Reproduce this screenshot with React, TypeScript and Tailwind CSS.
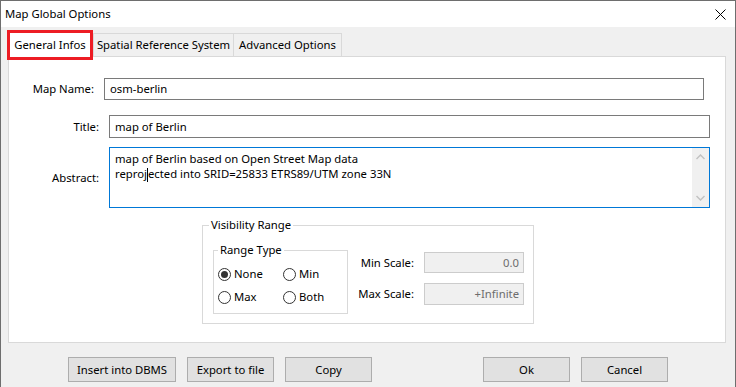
import React from "react";

function Radio({ checked, label }: { checked?: boolean; label: string }) {
  return (
    <div className="flex items-center h-[16px]">
      <span className="w-[13px] h-[13px] rounded-full border border-[#333333] bg-white flex items-center justify-center shrink-0">
        {checked && <span className="w-[7px] h-[7px] rounded-full bg-[#333333]" />}
      </span>
      <span className="ml-[3px]">{label}</span>
    </div>
  );
}

function Btn({ w, label }: { w: string; label: string }) {
  return (
    <div className={`${w} h-[25px] bg-[#e1e1e1] border border-[#adadad] flex items-center justify-center`}>
      {label}
    </div>
  );
}

export default function App() {
  return (
    <div className="w-[736px] h-[387px] bg-[#f0f0f0] border-l border-r border-t border-[#6e6e6e] flex flex-col text-[11.3px] text-black font-['Noto_Sans','Liberation_Sans',sans-serif] leading-[16px] whitespace-nowrap overflow-hidden">
      {/* title bar */}
      <div className="h-[26px] bg-white flex items-center justify-between pl-[4px] pr-[9px] shrink-0">
        <span>Map Global Options</span>
        <svg width="11" height="11" viewBox="0 0 11 11">
          <path d="M0.5 0.5 L10.5 10.5 M10.5 0.5 L0.5 10.5" stroke="#000" strokeWidth="1" />
        </svg>
      </div>

      {/* tabs */}
      <div className="flex items-end mt-[3px] ml-[6px] h-[26px] shrink-0">
        <div className="relative z-10 w-[86px] h-[30px] -mb-[4px] bg-white border-[3px] border-[#ed1c24] flex items-center justify-center">
          General Infos
        </div>
        <div className="w-[141px] h-[23px] bg-[#f0f0f0] border-t border-l border-r border-[#d9d9d9] flex items-center justify-center">
          Spatial Reference System
        </div>
        <div className="w-[108px] h-[23px] bg-[#f0f0f0] border-t border-r border-[#d9d9d9] flex items-center justify-center">
          Advanced Options
        </div>
      </div>

      {/* panel */}
      <div className="ml-[7px] w-[718px] h-[287px] bg-white border border-[#d9d9d9] flex flex-col shrink-0">
        <div className="flex items-center mt-[21px]">
          <div className="w-[85px] text-right">Map Name:</div>
          <div className="ml-[10px] w-[600px] h-[22px] border border-[#7a7a7a] flex items-center pl-[5px]">osm-berlin</div>
        </div>
        <div className="flex items-center mt-[15px]">
          <div className="w-[90px] text-right">Title:</div>
          <div className="ml-[10px] w-[601px] h-[23px] border border-[#7a7a7a] flex items-center pl-[5px]">map of Berlin</div>
        </div>
        <div className="flex items-center mt-[9px]">
          <div className="w-[90px] text-right">Abstract:</div>
          <div className="ml-[10px] w-[601px] h-[61px] border border-[#0078d7] flex">
            <div className="flex-1 pl-[5px] pt-[3px] leading-[15px]">
              <div>map of Berlin based on Open Street Map data</div>
              <div>
                reproj<span className="inline-block w-0 h-[14px] border-l border-black align-middle" />ected into SRID=25833 ETRS89/UTM zone 33N
              </div>
            </div>
            <div className="w-[17px] bg-[#f0f0f0] flex flex-col items-center justify-between py-[6px]">
              <svg width="9" height="6" viewBox="0 0 9 6">
                <path d="M0.5 5 L4.5 1 L8.5 5" stroke="#c2c2c2" strokeWidth="1.5" fill="none" />
              </svg>
              <svg width="9" height="6" viewBox="0 0 9 6">
                <path d="M0.5 1 L4.5 5 L8.5 1" stroke="#c2c2c2" strokeWidth="1.5" fill="none" />
              </svg>
            </div>
          </div>
        </div>

        {/* visibility range */}
        <fieldset className="mt-[9px] ml-[193px] w-[332px] h-[107px] border border-[#d9d9d9] pl-[6px]">
          <legend className="px-[2px]">Visibility Range</legend>
          <div className="flex">
            <fieldset className="mt-[9px] ml-[4px] w-[135px] h-[72px] border border-[#d9d9d9] pl-[4px]">
              <legend className="px-[2px]">Range Type</legend>
              <div className="grid grid-cols-[65px_60px] mt-[8px] gap-y-[7px]">
                <Radio checked label="None" />
                <Radio label="Min" />
                <Radio label="Max" />
                <Radio label="Both" />
              </div>
            </fieldset>
            <div className="flex flex-col mt-[19px] ml-[6px] gap-[10px]">
              <div className="flex items-center">
                <div className="w-[60px] text-right">Min Scale:</div>
                <div className="ml-[10px] w-[100px] h-[21px] bg-[#f0f0f0] border border-[#cccccc] text-[#6d6d6d] flex items-center justify-end pr-[4px]">0.0</div>
              </div>
              <div className="flex items-center">
                <div className="w-[60px] text-right">Max Scale:</div>
                <div className="ml-[10px] w-[100px] h-[22px] bg-[#f0f0f0] border border-[#cccccc] text-[#6d6d6d] flex items-center justify-end pr-[4px]">+Infinite</div>
              </div>
            </div>
          </div>
        </fieldset>
      </div>

      {/* buttons */}
      <div className="flex mt-[14px] ml-[67px] shrink-0">
        <Btn w="w-[108px]" label="Insert into DBMS" />
        <div className="ml-[11px]"><Btn w="w-[87px]" label="Export to file" /></div>
        <div className="ml-[11px]"><Btn w="w-[87px]" label="Copy" /></div>
        <div className="ml-[111px]"><Btn w="w-[87px]" label="Ok" /></div>
        <div className="ml-[11px]"><Btn w="w-[87px]" label="Cancel" /></div>
      </div>
    </div>
  );
}
